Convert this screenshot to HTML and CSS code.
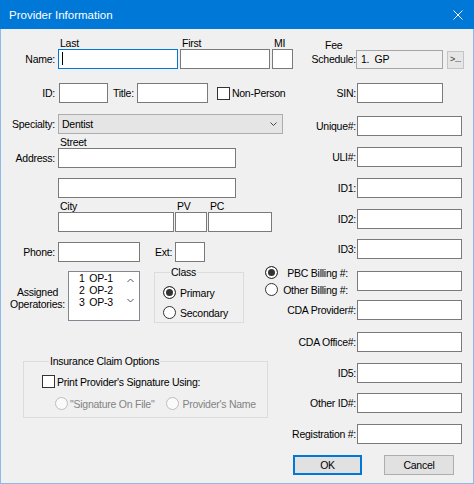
FILE: index.html
```html
<!DOCTYPE html>
<html>
<head>
<meta charset="utf-8">
<title>Provider Information</title>
<link rel="stylesheet" href="styles.css">
</head>
<body>
<div class="win">
  <div class="titlebar">
    <span class="title">Provider Information</span>
    <svg class="close" width="10" height="10" viewBox="0 0 10 10"><path d="M0.5 0.5L9.5 9.5M9.5 0.5L0.5 9.5" stroke="#fff" stroke-width="1" fill="none"/></svg>
  </div>
  <div class="client">
    <div class="lcol">
      <div class="row r-name">
        <span class="lbl">Name:</span>
        <div class="field f-last"><span class="cap">Last</span><span class="edit focus w-last"><span class="caret"></span></span></div>
        <div class="field f-first"><span class="cap">First</span><span class="edit w-first"></span></div>
        <div class="field f-mi"><span class="cap">MI</span><span class="edit w-mi"></span></div>
      </div>
      <div class="row r-id">
        <span class="lbl">ID:</span>
        <span class="edit w-id"></span>
        <span class="inlbl l-title">Title:</span>
        <span class="edit w-title"></span>
        <span class="check c-np"></span><span class="ctext">Non-Person</span>
      </div>
      <div class="row r-spec">
        <span class="lbl">Specialty:</span>
        <div class="combo"><span class="combo-text">Dentist</span><svg class="chev" width="7" height="4" viewBox="0 0 7 4"><path d="M0.5 0.5L3.5 3.5L6.5 0.5" stroke="#444" fill="none"/></svg></div>
      </div>
      <div class="row r-addr">
        <span class="lbl">Address:</span>
        <div class="field f-street"><span class="cap">Street</span><span class="edit w-street"></span></div>
      </div>
      <div class="row r-addr2">
        <span class="lbl"></span>
        <span class="edit w-street"></span>
      </div>
      <div class="row r-city">
        <span class="lbl"></span>
        <div class="field f-city"><span class="cap">City</span><span class="edit w-city"></span></div>
        <div class="field f-pv"><span class="cap">PV</span><span class="edit w-pv"></span></div>
        <div class="field f-pc"><span class="cap">PC</span><span class="edit w-pc"></span></div>
      </div>
      <div class="row r-phone">
        <span class="lbl">Phone:</span>
        <span class="edit w-phone"></span>
        <span class="inlbl l-ext">Ext:</span>
        <span class="edit w-ext"></span>
      </div>
      <div class="row r-ops">
        <div class="ops-lbl">Assigned<br>Operatories:</div>
        <div class="listbox">
          <div class="items">
            <div>1 OP-1</div>
            <div>2 OP-2</div>
            <div>3 OP-3</div>
          </div>
          <svg class="vscroll" width="17" height="48" viewBox="0 0 17 48"><path d="M5.5 10L8.5 7L11.5 10" stroke="#555" fill="none"/><path d="M5.5 27L8.5 30L11.5 27" stroke="#555" fill="none"/></svg>
        </div>
        <fieldset class="group g-class">
          <legend>Class</legend>
          <div class="opt"><span class="radio on"></span><span class="otext">Primary</span></div>
          <div class="opt opt2"><span class="radio"></span><span class="otext">Secondary</span></div>
        </fieldset>
      </div>
      <fieldset class="group g-ins">
        <legend>Insurance Claim Options</legend>
        <div class="opt"><span class="check"></span><span class="ctext">Print Provider's Signature Using:</span></div>
        <div class="opt dis">
          <span class="radio"></span><span class="dtext">"Signature On File"</span>
          <span class="radio r2"></span><span class="dtext d2">Provider's Name</span>
        </div>
      </fieldset>
    </div>
    <div class="rcol">
      <div class="rrow r-fee">
        <div class="fee-lbl"><span class="fee-in">Fee<br>Schedule:</span></div>
        <span class="edit ro w-fee">1.  GP</span>
        <span class="mini-btn">&gt;...</span>
      </div>
      <div class="rrow mt14"><span class="rlbl">SIN:</span><span class="edit w-sin"></span></div>
      <div class="rrow mt13"><span class="rlbl">Unique#:</span><span class="edit w-r"></span></div>
      <div class="rrow"><span class="rlbl">ULI#:</span><span class="edit w-r"></span></div>
      <div class="rrow"><span class="rlbl">ID1:</span><span class="edit w-r"></span></div>
      <div class="rrow"><span class="rlbl">ID2:</span><span class="edit w-r"></span></div>
      <div class="rrow mt10"><span class="rlbl">ID3:</span><span class="edit w-r"></span></div>
      <div class="rrow mt7">
        <div class="bill-opts">
          <div class="bill-opt"><span class="radio on"></span><span>PBC Billing #:</span></div>
          <div class="bill-opt"><span class="radio"></span><span>Other Billing #:</span></div>
        </div>
        <span class="edit w-r"></span>
      </div>
      <div class="rrow mt4"><span class="rlbl">CDA Provider#:</span><span class="edit w-r"></span></div>
      <div class="rrow mt12"><span class="rlbl">CDA Office#:</span><span class="edit w-r"></span></div>
      <div class="rrow"><span class="rlbl">ID5:</span><span class="edit w-r"></span></div>
      <div class="rrow mt10"><span class="rlbl">Other ID#:</span><span class="edit w-r"></span></div>
      <div class="rrow"><span class="rlbl">Registration #:</span><span class="edit w-r"></span></div>
      <div class="rrow r-btns">
        <span class="btn def">OK</span>
        <span class="btn cancel">Cancel</span>
      </div>
    </div>
  </div>
</div>
</body>
</html>
```

FILE: styles.css
```css
* { box-sizing: border-box; }
html, body { margin: 0; padding: 0; }
body {
  width: 474px;
  height: 484px;
  overflow: hidden;
  background: #f0f0f0;
  font-family: "Liberation Sans", Arial, sans-serif;
  font-size: 10.5px;
  line-height: 12px;
  letter-spacing: -0.25px;
  color: #000;
}
.win {
  width: 474px;
  height: 484px;
  display: flex;
  flex-direction: column;
  box-shadow: inset 1px 0 #8fb9e6, inset -1px 0 #8fb9e6, inset 0 -1px #8fb9e6;
}
.titlebar {
  flex: none;
  height: 29px;
  margin-bottom: 1px;
  background: #0078d7;
  color: #fff;
  display: flex;
  align-items: center;
  justify-content: space-between;
  padding: 0 11px 0 9px;
  font-size: 11.5px;
  letter-spacing: 0;
  line-height: normal;
}
.close { display: block; }
.client { display: flex; flex: 1; }
.lcol { width: 300px; flex: none; }
.rcol { width: 174px; flex: none; display: flex; flex-direction: column; padding-top: 8px; }

/* generic controls */
.edit {
  display: block;
  flex: none;
  height: 20px;
  background: #fff;
  border: 1px solid #7a7a7a;
}
.edit.focus { border-color: #0078d7; }
.edit.ro { background: #f0f0f0; border-color: #a6a6a6; }
.caret { display: block; width: 1px; height: 13px; background: #000; margin: 2px 0 0 3px; }
.check { display: block; flex: none; width: 13px; height: 13px; border: 1px solid #333; background: #fff; }
.radio { display: block; flex: none; width: 13px; height: 13px; border: 1px solid #333; border-radius: 50%; background: #fff; }
.radio.on { background: #333; box-shadow: inset 0 0 0 2px #fff; }
.ctext { margin-left: 2px; white-space: nowrap; }

/* left column rows */
.row { display: flex; align-items: flex-end; white-space: nowrap; }
.lbl { flex: none; width: 55px; height: 20px; line-height: 20px; text-align: right; }
.inlbl { flex: none; height: 20px; line-height: 20px; }
.field { display: flex; flex-direction: column; flex: none; }
.cap { display: block; height: 11px; line-height: 11px; padding-left: 2px; }

.r-name { margin-top: 8px; }
.f-last { margin-left: 3px; }
.w-last { width: 120px; }
.f-first { margin-left: 2px; }
.w-first { width: 90px; }
.f-mi { margin-left: 2px; }
.w-mi { width: 21px; }

.r-id { margin-top: 14px; align-items: center; }
.w-id { width: 49px; margin-left: 4px; }
.l-title { margin-left: 5px; }
.w-title { width: 71px; margin-left: 3px; }
.c-np { margin-left: 9px; }

.r-spec { margin-top: 11px; }
.combo {
  margin-left: 3px;
  width: 225px;
  height: 20px;
  border: 1px solid #adadad;
  background: #e5e5e5;
  display: flex;
  align-items: center;
  justify-content: space-between;
  padding: 0 5px 0 3px;
}
.chev { display: block; }

.r-addr { margin-top: 3px; }
.f-street { margin-left: 3px; }
.w-street { width: 178px; }
.r-addr2 { margin-top: 10px; }
.r-addr2 .w-street { margin-left: 3px; }

.r-city { margin-top: 3px; }
.f-city { margin-left: 3px; }
.w-city { width: 116px; }
.f-pv { margin-left: 1px; }
.w-pv { width: 32px; }
.f-pc { margin-left: 1px; }
.w-pc { width: 64px; }

.r-phone { margin-top: 10px; }
.w-phone { width: 82px; margin-left: 3px; }
.l-ext { margin-left: 15px; }
.w-ext { width: 30px; margin-left: 3px; }

.r-ops { margin-top: 5px; align-items: flex-start; }
.ops-lbl { flex: none; margin: 19px 0 0 10px; width: 55px; text-align: center; line-height: 12px; }
.listbox {
  flex: none;
  margin: 4px 0 0 3px;
  width: 72px;
  height: 50px;
  border: 1px solid #828790;
  background: #fff;
  display: flex;
}
.items { flex: 1; padding-left: 10px; line-height: 12px; word-spacing: 2px; }
.vscroll { display: block; flex: none; }

.group { margin: 0; padding: 0; border: 1px solid #dcdcdc; min-width: 0; }
.group legend { padding: 0 1px; margin-left: 7px; height: 11px; line-height: 11px; }
.opt { display: flex; align-items: center; height: 13px; white-space: nowrap; }

.g-class { flex: none; margin-left: 14px; width: 90px; padding: 8px 0 3px 8px; }
.g-class .opt2 { margin-top: 7px; }
.otext { margin-left: 4px; }

.g-ins { margin: 33px 0 0 23px; width: 245px; padding: 8px 0 7px 18px; }
.g-ins .dis { margin-top: 9px; padding-left: 13px; color: #838383; }
.dis .radio { border-color: #bdbdbd; background: #fafafa; }
.dtext { margin-left: 2px; }
.dis .r2 { margin-left: 12px; }
.dis .d2 { margin-left: 3px; }

/* right column rows */
.rrow { display: flex; align-items: center; margin-left: -40px; margin-top: 11px; white-space: nowrap; }
.rlbl { flex: none; width: 97px; padding-right: 1px; text-align: right; }
.w-r { width: 105px; }
.w-sin { width: 86px; }
.mt14 { margin-top: 14px; }
.mt13 { margin-top: 13px; }
.mt12 { margin-top: 12px; }
.mt10 { margin-top: 10px; }
.mt7 { margin-top: 7px; }
.mt4 { margin-top: 4px; }

.r-fee { margin-top: 0; align-items: flex-start; }
.fee-lbl { flex: none; width: 96px; text-align: right; line-height: 14px; }
.fee-in { display: inline-block; text-align: center; }
.w-fee { width: 87px; height: 19px; margin-top: 12px; padding-left: 4px; line-height: 17px; white-space: pre; }
.mini-btn {
  flex: none;
  margin: 13px 0 0 4px;
  width: 17px;
  height: 18px;
  border: 1px solid #c4c4c4;
  background: #e6e6e6;
  font-size: 9px;
  line-height: 15px;
  letter-spacing: -0.5px;
  text-align: center;
  color: #333;
}

.bill-opts { flex: none; margin: 0 9px 0 5px; width: 83px; display: flex; flex-direction: column; gap: 4px; }
.bill-opt { display: flex; justify-content: space-between; align-items: center; height: 13px; }

.r-btns { padding-left: 33px; }
.btn {
  flex: none;
  display: flex;
  align-items: center;
  justify-content: center;
  height: 20px;
  border: 1px solid #adadad;
  background: #e1e1e1;
}
.btn.def { width: 69px; border-color: #0078d7; box-shadow: inset 0 0 0 1px #0078d7; }
.btn.cancel { width: 70px; margin-left: 22px; }
```
